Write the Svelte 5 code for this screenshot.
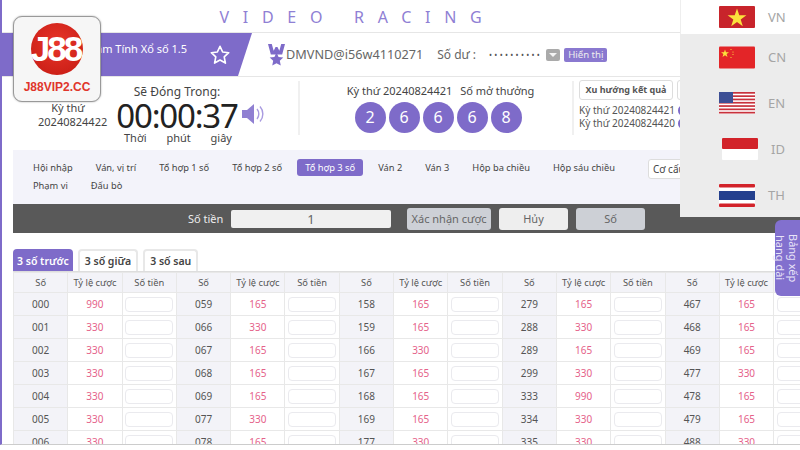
<script>
  const navItems = ['Hội nhập', 'Ván, vị trí', 'Tổ hợp 1 số', 'Tổ hợp 2 số', 'Tổ hợp 3 số', 'Ván 2', 'Ván 3', 'Hộp ba chiều', 'Hộp sáu chiều', 'Phạm vi', 'Đấu bò']
  const balls = [2, 6, 6, 6, 8]
  const tabs = ['3 số trước', '3 số giữa', '3 số sau']
  const langs = ['VN', 'CN', 'EN', 'ID', 'TH']
  const groups = [0, 1, 2, 3, 4]

  const rows = [
    [['000', 990], ['059', 165], ['158', 165], ['279', 165], ['467', 165]],
    [['001', 330], ['066', 330], ['159', 165], ['288', 330], ['468', 165]],
    [['002', 330], ['067', 165], ['166', 330], ['289', 165], ['469', 165]],
    [['003', 330], ['068', 165], ['167', 165], ['299', 330], ['477', 330]],
    [['004', 330], ['069', 165], ['168', 165], ['333', 990], ['478', 165]],
    [['005', 330], ['077', 330], ['169', 165], ['334', 330], ['479', 165]],
    [['006', 330], ['078', 165], ['177', 330], ['335', 330], ['488', 330]],
  ]
</script>

<div class="page">
  <div class="title">VIDEO RACING</div>

  <div class="info">
    <div class="game-name">
      <span class="game-text">Tâm Tính Xổ số 1.5</span>
      <svg class="fav" viewBox="0 0 24 24" width="22" height="22">
        <path d="M12 2.500l2.900 6.200 6.600.8-4.900 4.600 1.300 6.700-5.900-3.300-5.900 3.300 1.300-6.700-4.900-4.600 6.600-.8z" fill="none" stroke="#fff" stroke-width="1.800" stroke-linejoin="round" />
      </svg>
    </div>
    <svg class="rank" viewBox="0 0 18 24" width="17" height="23">
      <path d="M0 1h4l2 7 2-4 2 0 2 4 2-7h4l-3 11H3z" fill="#7e6bc9" />
      <path d="M9 10l2.200 4.600 5 .6-3.700 3.400 1 5L9 21.200l-4.500 2.400 1-5-3.700-3.400 5-.6z" fill="#7e6bc9" />
    </svg>
    <span class="account">DMVND@i56w4110271</span>
    <span class="balance-label">Số dư :</span>
    <span class="dots">••••••••••</span>
    <span class="caret"></span>
    <span class="show">Hiển thị</span>
  </div>

  <div class="stats">
    <div class="period">
      <div>Kỳ thứ</div>
      <div>20240824422</div>
    </div>
    <div class="countdown">
      <div class="closing">Sẽ Đóng Trong:</div>
      <div class="timer">00:00:37</div>
      <div class="units"><span>Thời</span><span>phút</span><span>giây</span></div>
    </div>
    <svg class="speaker" viewBox="0 0 24 24" width="24" height="24">
      <path d="M1 8h5l7-6v20l-7-6H1z" fill="#9080d2" />
      <path d="M16 7c2.400 2.800 2.400 7.200 0 10M19 4.500c3.800 4.300 3.800 10.700 0 15" fill="none" stroke="#a99be0" stroke-width="1.400" />
    </svg>
    <div class="latest">
      <div class="latest-label"><span>Kỳ thứ 20240824421</span><span>Số mở thưởng</span></div>
      <div class="balls">
        {#each balls as b}
          <span class="ball">{b}</span>
        {/each}
      </div>
    </div>
    <div class="history">
      <div class="history-btns">
        <span class="trend">Xu hướng kết quả</span>
        <span class="trend">Xu hướng</span>
      </div>
      <div class="history-line">Kỳ thứ 20240824421 <i>2</i></div>
      <div class="history-line">Kỳ thứ 20240824420 <i>5</i></div>
    </div>
  </div>

  <div class="content">
    <div class="nav">
      <div class="nav-items">
        {#each navItems as item, i}
          <span class="nav-item" class:active={i === 4}>{item}</span>
        {/each}
      </div>
      <div class="select">Cơ cấu</div>
    </div>

    <div class="bet-bar">
      <span class="amount-label">Số tiền</span>
      <span class="amount">1</span>
      <span class="btn confirm">Xác nhận cược</span>
      <span class="btn cancel">Hủy</span>
      <span class="btn number">Số</span>
    </div>

    <div class="tabs">
      {#each tabs as t, i}
        <span class="tab" class:current={i === 0}>{t}</span>
      {/each}
    </div>

    <table class="odds">
      <thead>
        <tr>
          {#each groups as g}
            <th class="key">Số</th>
            <th>Tỷ lệ cược</th>
            <th>Số tiền</th>
          {/each}
        </tr>
      </thead>
      <tbody>
        {#each rows as row}
          <tr>
            {#each row as [num, odd]}
              <td class="key">{num}</td>
              <td class="odd">{odd}</td>
              <td><span class="stake"></span></td>
            {/each}
          </tr>
        {/each}
      </tbody>
    </table>
  </div>

  <div class="logo">
    <div class="logo-circle">J88</div>
    <div class="logo-text">J88VIP2.CC</div>
  </div>

  <div class="langs">
    {#each langs as l}
      <div class="lang" class:top={l === 'VN'} class:id={l === 'ID'}>
        {#if l === 'VN'}
          <svg viewBox="0 0 36 22" width="36" height="22"><rect width="36" height="22" rx="1" fill="#c8242b" /><path d="M18 2.500l2.300 6.700h7.100l-5.700 4.200 2.100 6.800-5.800-4.100-5.800 4.100 2.100-6.800-5.700-4.200h7.100z" fill="#fbe13c" /></svg>
        {:else if l === 'CN'}
          <svg viewBox="0 0 36 22" width="36" height="23"><rect width="36" height="22" rx="1" fill="#e32528" /><path d="M6 3l1 2.800h3l-2.400 1.800.9 2.900L6 8.800l-2.500 1.700.9-2.900L2 5.800h3z" fill="#fbe13c" /><circle cx="12" cy="3" r=".6" fill="#fbe13c" /><circle cx="14" cy="5.500" r=".6" fill="#fbe13c" /><circle cx="14" cy="8" r=".6" fill="#fbe13c" /><circle cx="12" cy="11" r=".6" fill="#fbe13c" /></svg>
        {:else if l === 'EN'}
          <svg viewBox="0 0 36 22" width="36" height="22">
            <rect width="36" height="22" fill="#fff" />
            {#each [0, 1, 2, 3, 4, 5, 6] as s}
              <rect y={s * 3.3} width="36" height="1.7" fill="#c8323c" />
            {/each}
            <rect width="14" height="11" fill="#3d4f95" />
          </svg>
        {:else if l === 'ID'}
          <svg viewBox="0 0 36 22" width="36" height="22"><rect width="36" height="22" rx="1" fill="#fff" /><rect width="36" height="11" rx="1" fill="#d2232a" /></svg>
        {:else}
          <svg viewBox="0 0 36 23" width="36" height="23"><rect width="36" height="23" rx="1" fill="#fff" /><rect width="36" height="3.500" rx="1" fill="#d2232a" /><rect y="19.500" width="36" height="3.500" rx="1" fill="#d2232a" /><rect y="7" width="36" height="9" fill="#24408e" /></svg>
        {/if}
        <span>{l}</span>
      </div>
    {/each}
  </div>

  <div class="side-tab">Bảng xếp hạng dài</div>
</div>

<style>
  :global(body) { margin: 0; background: #fff; overflow: hidden; }

  .page {
    position: relative; width: 798px; height: 444px; overflow: hidden;
    border-left: 2px solid #7e6bc9; border-bottom: 1px solid #ccc;
    font-family: "Noto Sans", "Open Sans", sans-serif; color: #444; background: #fff;
  }

  .title {
    height: 33px; line-height: 35px; text-align: center; padding-right: 87px;
    font-size: 16px; letter-spacing: 13.7px; color: #8f80d4;
    border-bottom: 1px solid #e6e6e6; box-sizing: border-box;
  }

  .info {
    height: 44px; display: flex; align-items: center; font-size: 12px;
    border-bottom: 1px solid #e6e6e6; box-sizing: border-box; color: #666;
  }
  .game-name {
    width: 250px; height: 43px; background: #7e6bc9; color: #fff; flex-shrink: 0;
    clip-path: polygon(0 0, 100% 0, 236px 100%, 0 100%);
    display: flex; align-items: center; justify-content: flex-end; padding-right: 21px; box-sizing: border-box; gap: 22px;
    font-size: 11px;
  }
  .game-text { white-space: nowrap; margin-top: -12px; }
  .fav { flex-shrink: 0; }
  .rank { margin-left: 16px; }
  .account { font-size: 12.7px; margin: -2px 0 0 1px; }
  .balance-label { margin-left: 14px; font-size: 12px; }
  .dots { margin-left: 13px; font-size: 8px; letter-spacing: 2.3px; color: #555; }
  .caret { position: relative; width: 14px; height: 12px; background: #aaa; border-radius: 2px; margin-left: 4px; }
  .caret::after {
    content: ''; position: absolute; left: 3px; top: 4px;
    border: 4px solid transparent; border-top: 4px solid #f4f4f4; border-bottom: 0;
  }
  .show { margin-left: 4px; background: #8a79d0; color: #eee; font-size: 9.6px; padding: 0 4px; border-radius: 2px; height: 14px; line-height: 14px; width: 35px; text-align: center; white-space: nowrap; }

  .stats { position: relative; height: 73px; display: flex; font-size: 11px; color: #444; }
  .period { width: 96px; padding-top: 24px; text-align: center; line-height: 14px; padding-left: 36px; box-sizing: border-box; margin-right: 17px; }
  .countdown { width: 124px; text-align: center; padding-top: 6px; }
  .closing { font-size: 12px; line-height: 18px; }
  .timer { font-size: 33px; line-height: 36px; color: #222; margin-top: -3px; letter-spacing: -1.2px; }
  .units { display: flex; justify-content: space-between; padding: 0 7px 0 9px; line-height: 14px; margin-top: -3px; }
  .speaker { margin: 25px 0 0 2px; }
  .latest { width: 272px; margin-left: 33px; border-left: 2px solid #f0f0f0; border-right: 2px solid #f0f0f0; height: 54px; margin-top: 4px; display: flex; flex-direction: column; align-items: center; }
  .latest-label { display: flex; gap: 8px; line-height: 16px; margin-top: 2px; padding-left: 9px; }
  .balls { display: flex; gap: 3px; margin-top: 3px; margin-left: 4px; }
  .ball { width: 31px; height: 31px; border-radius: 50%; background: #7e6bc9; color: #fff; font-size: 16px; line-height: 31px; text-align: center; }
  .history { margin-left: 5px; padding-top: 3px; white-space: nowrap; font-size: 10px; color: #555; }
  .history-btns { display: flex; gap: 4px; margin-bottom: 4px; }
  .trend { border: 1px solid #ddd; border-radius: 3px; font-weight: 700; padding: 0 5px; height: 18px; line-height: 18px; font-size: 9px; width: 82px; text-align: center; }
  .history-line { line-height: 13px; }
  .history-line i { display: inline-block; width: 11px; height: 11px; border-radius: 50%; background: #7e6bc9; color: #fff; font-style: normal; text-align: center; line-height: 11px; font-size: 9px; }

  .content { margin: 0 0 0 11px; }

  .nav { height: 54px; background: #f3f3fa; display: flex; padding: 9px 0 0 12px; box-sizing: border-box; font-size: 9.3px; color: #444; }
  .nav-items { width: 620px; display: flex; flex-wrap: wrap; align-content: flex-start; column-gap: 7px; row-gap: 1px; }
  .nav-item { padding: 0 8px; height: 17px; line-height: 17px; border-radius: 3px; }
  .nav-item.active { background: #7e6bc9; color: #fff; }
  .select { margin-left: 3px; width: 90px; height: 18px; line-height: 18px; background: #fff; border: 1px solid #ddd; border-radius: 3px; padding-left: 4px; font-size: 10px; }

  .bet-bar { height: 29px; background: #595959; display: flex; align-items: center; font-size: 11px; color: #666; }
  .amount-label { margin-left: 175px; color: #eee; width: 43px; font-size: 11px; }
  .amount { width: 160px; height: 18px; line-height: 18px; background: #f0f0f0; border-radius: 2px; text-align: center; font-size: 13px; }
  .btn { height: 22px; line-height: 22px; text-align: center; border-radius: 3px; white-space: nowrap; }
  .confirm { width: 84px; margin-left: 16px; background: #cdd0d6; }
  .cancel { width: 69px; margin-left: 8px; background: #eee; }
  .number { width: 69px; margin-left: 8px; background: #cdd0d6; }

  .tabs { display: flex; gap: 5px; margin-top: 16px; height: 23px; border-bottom: 1px solid #ddd; box-sizing: border-box; font-size: 10.5px; font-weight: 600; }
  .tab { border: 2px solid #e8e8e8; border-bottom: 0; padding: 0 5px; line-height: 21px; border-radius: 4px 4px 0 0; box-sizing: border-box; height: 22px; min-width: 53px; text-align: center; }
  .tab.current { background: #7e6bc9; border-color: #7e6bc9; color: #fff; padding: 0 2px; }

  .odds { border-collapse: collapse; table-layout: fixed; width: 815px; font-size: 10px; }
  .odds th, .odds td { border: 1px solid #e8e8e8; text-align: center; padding: 0; font-weight: 400; width: 54.3px; color: #555; box-sizing: border-box; }
  .odds th { height: 20px; background: #f3f3f8; font-size: 9.3px; }
  .odds td { height: 23px; }
  .odds .key { background: #f3f3f8; }
  .odds .odd { color: #e5628a; }
  .stake { display: block; width: 48px; height: 15px; margin: 0 auto; border: 1px solid #eaeaee; border-radius: 4px; background: #fff; box-sizing: border-box; }

  .logo {
    position: absolute; left: 11px; top: 16px; width: 88px; height: 86px; box-sizing: border-box;
    background: #f6f6f6; border: 1px solid #999; border-radius: 9px; text-align: center;
    box-shadow: 0 0 2px rgba(0, 0, 0, .35);
  }
  .logo-circle {
    width: 52px; height: 52px; border-radius: 50%; background: radial-gradient(circle at 50% 40%, #e8352a, #c41a12);
    margin: 6px auto 0; color: #fff; font: 700 35px/52px "Liberation Sans", sans-serif; letter-spacing: -3px; text-indent: -3px;
  }
  .logo-text { font: 700 12px/14px "Liberation Sans", sans-serif; color: #e0352b; margin-top: 5px; white-space: nowrap; }

  .langs { position: absolute; left: 678px; top: 0; width: 120px; height: 217px; background: #ececec; display: flex; flex-direction: column; font-size: 13px; color: #a5a5a5; }
  .lang { height: 46px; flex-shrink: 0; display: flex; align-items: center; gap: 13px; padding-left: 39px; box-sizing: border-box; }
  .lang.top { background: #fff; height: 34px; border-left: 1px solid #eee; padding-left: 38px; }
  .lang.id { padding-left: 42px; }

  .side-tab {
    position: absolute; right: 0; top: 220px; width: 25px; height: 76px; background: #8270ce; color: #e8e4f8;
    border-radius: 6px 0 0 6px; writing-mode: vertical-rl; font-size: 11px; line-height: 13px; text-align: center; box-sizing: border-box;
  }
</style>
